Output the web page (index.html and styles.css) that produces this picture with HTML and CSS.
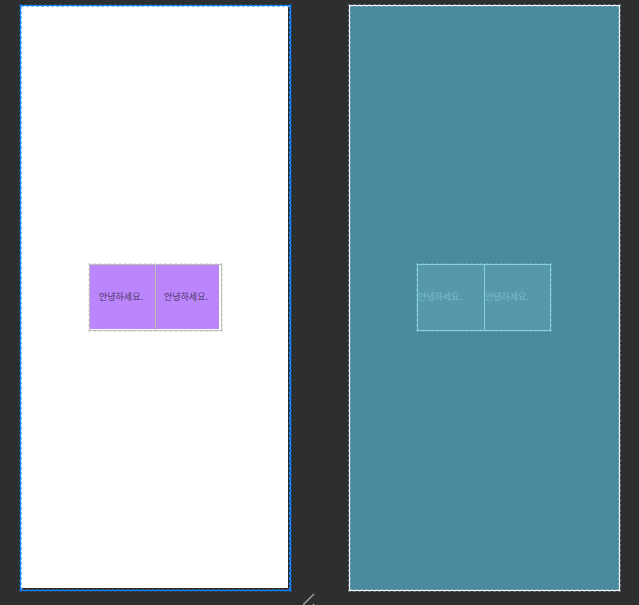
FILE: index.html
```html
<!DOCTYPE html>
<html lang="ko">
<head>
<meta charset="utf-8">
<title>Layout editor</title>
<link rel="stylesheet" href="styles.css">
</head>
<body>
<main class="surface">
  <section class="screen design">
    <div class="row">
      <div class="cell"><span>안녕하세요.</span></div>
      <div class="cell"><span>안녕하세요.</span></div>
    </div>
  </section>
  <section class="screen blueprint">
    <div class="row">
      <div class="cell"><span>안녕하세요.</span></div>
      <div class="cell"><span>안녕하세요.</span></div>
    </div>
  </section>
  <svg class="grip" width="13" height="12" viewBox="0 0 13 12" aria-hidden="true">
    <path d="M0 12 11 1M10 12l1-1" fill="none" stroke="#a2a3a4" stroke-width="1.4"/>
  </svg>
</main>
</body>
</html>
```
FILE: styles.css
```css
* { box-sizing: border-box; }

body {
  margin: 0;
  background: #2d2e30;
  font-family: "Noto Sans CJK KR", "Noto Sans", sans-serif;
}

.surface {
  position: relative;
  display: grid;
  grid-template-columns: 1fr 1fr;
  gap: 58px;
  height: 100vh;
  padding: 5px 19px 14px 20px;
}

.screen {
  position: relative;
  display: flex;
  align-items: center;
  justify-content: center;
  padding-bottom: 1px;
  border: 1px solid;
  outline: 1px dashed;
}

.design {
  border-color: #1684ff;
  outline-color: #26486a;
  background: linear-gradient(#fff, #fff) 0 0 / calc(100% - 2px) calc(100% - 2px) no-repeat padding-box;
}

.design::before {
  content: "";
  position: absolute;
  inset: 0;
  border: 1px dashed #7fbcff;
  border-right-color: #1684ff;
  border-bottom-color: #235783;
}

.blueprint {
  padding-right: 1px;
  border-color: #f2f8fa;
  outline-color: #63696c;
  background: #4a8a9e;
}

.blueprint::before {
  content: "";
  position: absolute;
  inset: 0;
  border: 1px dashed #75a6b5;
}

.row {
  position: relative;
  display: flex;
  border: 1px solid;
}

.cell {
  display: flex;
  align-items: center;
  width: 66px;
  height: 65px;
  padding-bottom: 2px;
  font-size: 9px;
  line-height: 12px;
  white-space: nowrap;
}

.cell + .cell { border-left: 1px solid; }

.design .row,
.design .cell { border-color: #bebebe; }

.design .row { outline: 1px dashed #e4e4e4; }

.design .cell {
  justify-content: center;
  width: 65px;
  padding-right: 3px;
  background: linear-gradient(#bb86fc, #bb86fc) 0 0 / 100% calc(100% - 1px) no-repeat;
  color: #4b3565;
}

.design .cell + .cell {
  width: 66px;
  padding-right: 5px;
  background-size: calc(100% - 2px) calc(100% - 1px);
}

.blueprint .row {
  border-color: #86d2e0;
  outline: 1px dashed #60a2b4;
}

.blueprint .cell {
  border-color: #86d2e0;
  background: #5898ac;
  color: #79bed0;
}

.grip {
  position: absolute;
  left: 303px;
  bottom: 0;
}
```
